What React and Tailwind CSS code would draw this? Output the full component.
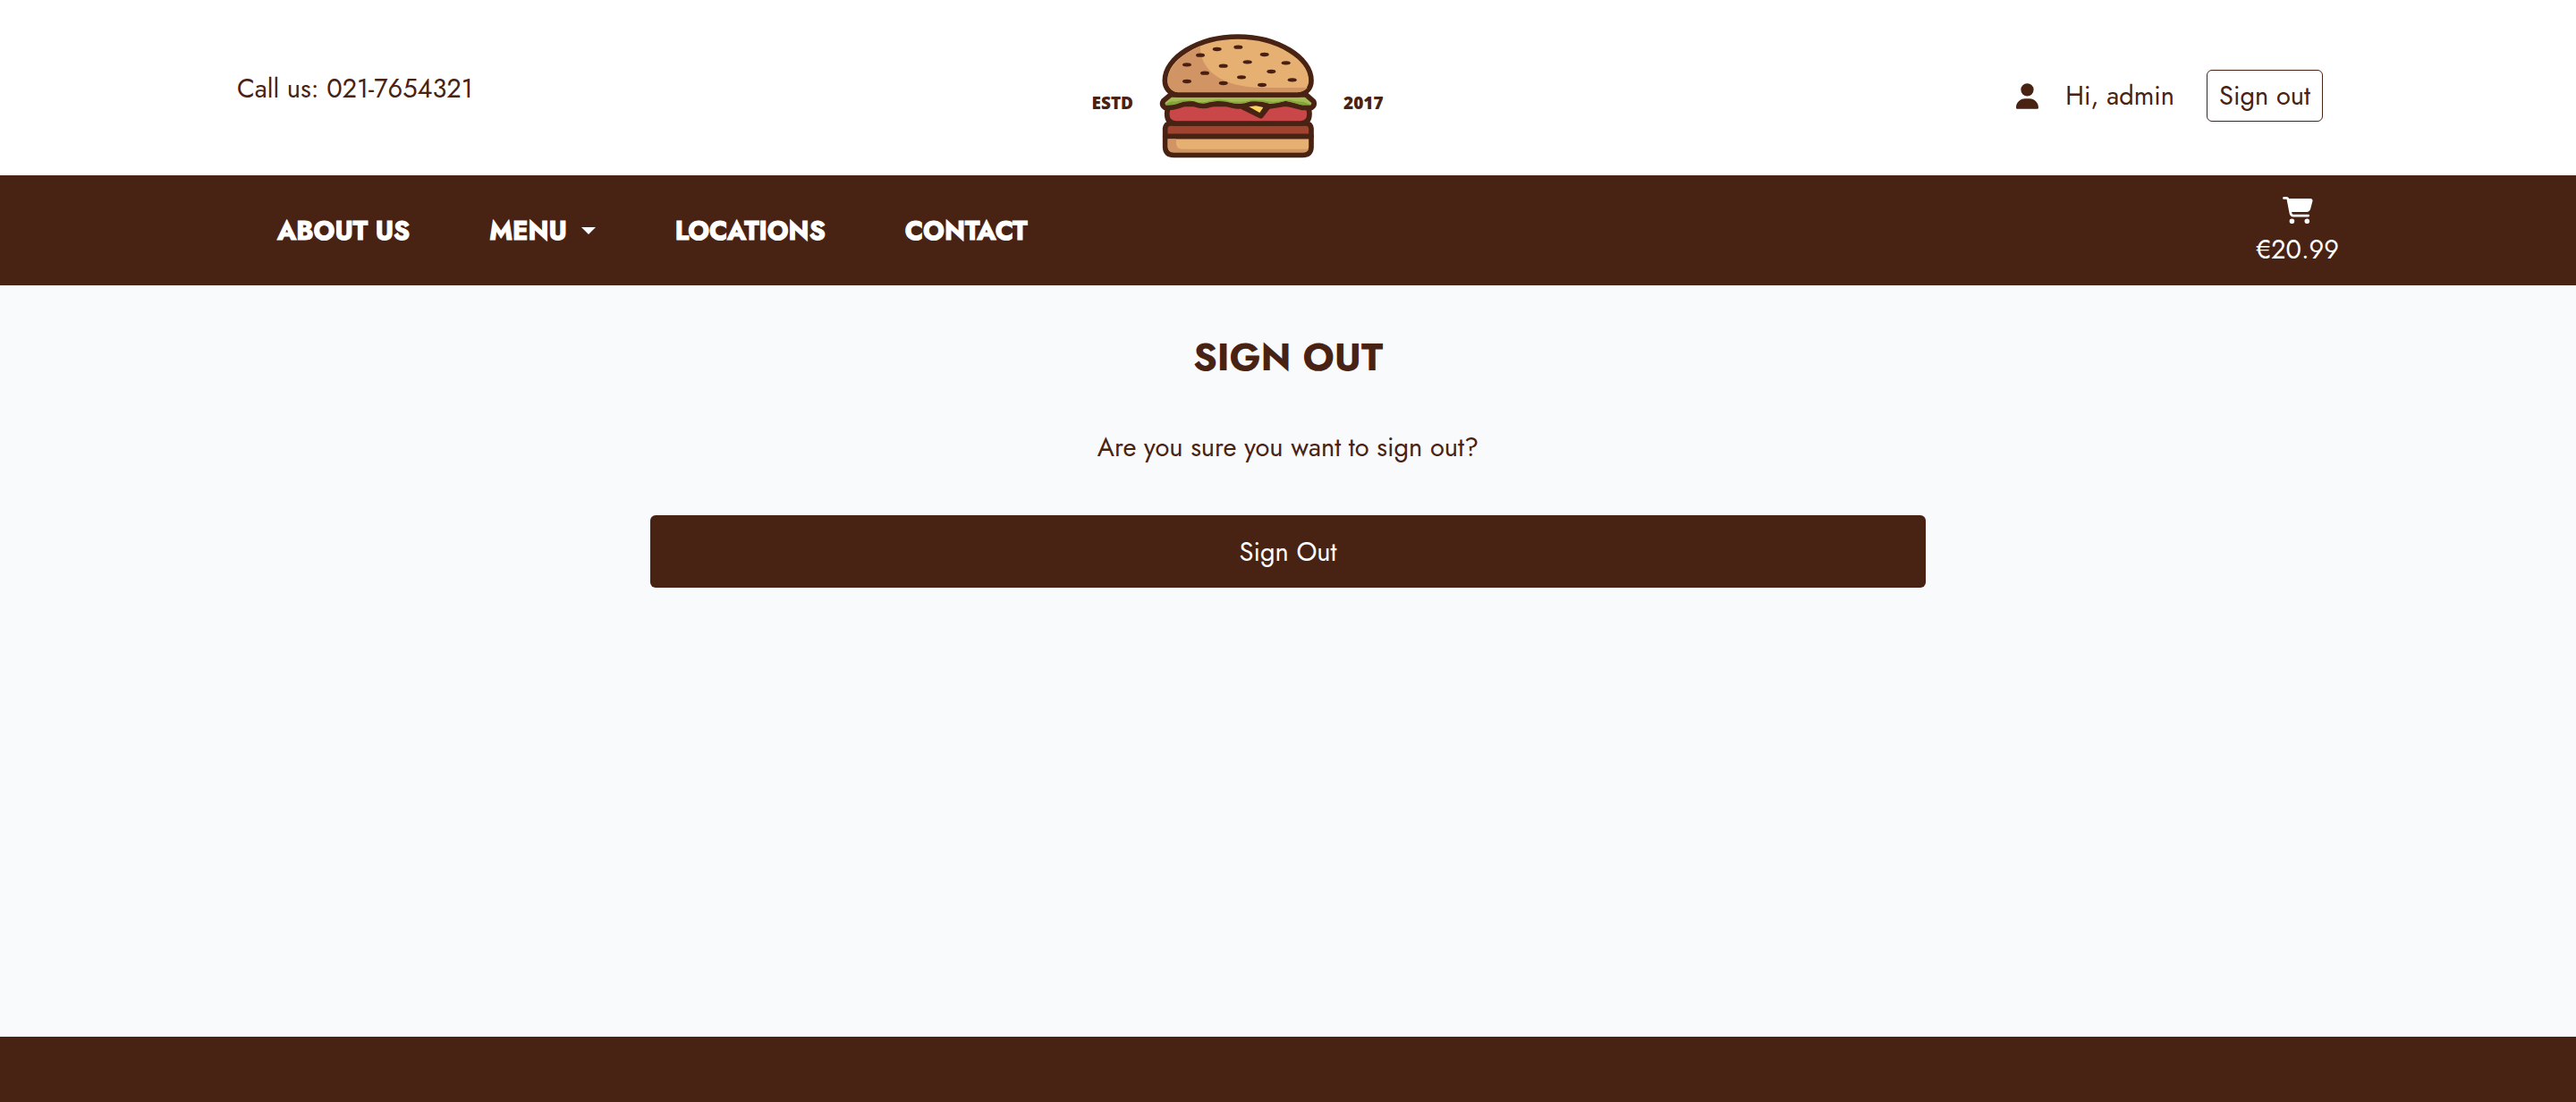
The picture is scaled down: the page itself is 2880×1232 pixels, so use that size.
import { FaCartShopping, FaUser } from "react-icons/fa6";

const seeds = [
  [236, 76], [307, 69], [395, 94], [467, 122], [180, 96], [135, 128], [257, 132], [338, 119],
  [418, 151], [195, 156], [318, 170], [488, 179], [135, 184], [257, 190], [387, 196],
];

function Burger() {
  return (
    <svg viewBox="42 22 531 420" className="w-[177px] h-[140px]" role="img" aria-label="Burger">
      <g stroke="#482212" strokeWidth="17" strokeLinejoin="round">
        {/* bottom bun and patty */}
        <path d="M62 368H552V405Q550 431 523 431H91Q64 431 62 405Z" fill="#e5b072" />
        <path d="M62 368V342Q64 325 80 325H534Q550 325 552 342V368Z" fill="#a04430" />
        {/* tomato */}
        <path d="M68 293Q68 262 98 260H516Q546 262 546 293Q546 325 516 325H98Q68 325 68 293Z" fill="#c94749" />
        {/* cheese */}
        <path d="M322 270L383 300L408 268L380 254Z" fill="#482212" />
        {/* lettuce */}
        <path
          d="M80 229L56 249Q48 262 61 272Q87 273 108 266Q135 254 160 260Q188 272 213 262Q252 252 288 265Q316 272 348 260Q386 256 412 268Q440 266 466 258Q500 266 520 272H553Q565 264 560 251L535 229Z"
          fill="#a4ba52"
        />
        {/* top bun */}
        <path d="M104 229C76 226 61 205 61 181C61 105 172 34 306 34C440 34 552 105 552 181C552 205 537 227 506 229Z" fill="#e5b072" />
      </g>
      <path d="M104 220C82 219 71 202 71 181C71 140 112 93 180 66C178 126 225 205 398 205H540C531 215 518 220 506 220Z" fill="#d19465" />
      <path d="M63 263C66 256 80 250 95 252Q124 243 145 250Q180 258 214 249Q248 241 285 252Q330 254 352 246Q390 246 424 253Q452 250 476 246Q505 254 525 252L551 263H521Q492 252 466 249Q435 258 412 258Q380 248 348 250Q310 261 287 257Q248 246 213 252Q190 260 160 252Q130 248 106 257Q90 264 63 263Z" fill="#82a43b" />
      <path d="M343 269L367 266L391 271L379 289Z" fill="#f8d35e" />
      <path d="M71 377H99V394Q101 411 119 411H543Q540 422 523 422H91Q73 420 71 405Z" fill="#d19465" />
      <g fill="#481f11">
        {seeds.map(([x, y]) => (
          <ellipse key={`${x}-${y}`} cx={x} cy={y} rx="15" ry="6.5" />
        ))}
      </g>
    </svg>
  );
}

export default function App() {
  return (
    <div className="flex min-h-screen flex-col bg-[#f8fafc] font-['Jost','Lato',sans-serif] text-[29px] leading-[42px] text-[#482212]">
      <header className="bg-white">
        <div className="mx-auto flex h-[196px] max-w-[2350px] items-start justify-between">
          <p className="pt-[78px]">Call us: 021-7654321</p>
          <a href="#home" className="flex items-center gap-[29px] pt-[37px] font-['Open_Sans',sans-serif] text-[19px] leading-6 font-extrabold">
            <span className="pt-4">ESTD</span>
            <Burger />
            <span className="pt-4">2017</span>
          </a>
          <div className="flex items-center pt-[78px] pr-[18px] pl-4">
            <FaUser className="h-[29px] w-[25px]" />
            <span className="ml-[30px]">Hi, admin</span>
            <a href="#sign-out" className="ml-9 rounded-md border border-[#482212] px-[13px] py-[7px]">
              Sign out
            </a>
          </div>
        </div>
      </header>

      <nav className="bg-[#482212] text-white">
        <div className="mx-auto flex h-[123px] max-w-[2350px] items-center justify-between">
          <div className="flex items-center gap-[89px] pl-[45px] font-bold [-webkit-text-stroke:1px_white]">
            <a href="#about">ABOUT US</a>
            <button type="button" className="flex items-center gap-4 font-bold">
              MENU
              <span className="border-x-8 border-t-8 border-x-transparent border-t-white" />
            </button>
            <a href="#locations">LOCATIONS</a>
            <a href="#contact">CONTACT</a>
          </div>
          <a href="#cart" className="flex flex-col items-center gap-2 pt-1">
            <FaCartShopping className="h-[30px] w-[34px]" />
            <span>€20.99</span>
          </a>
        </div>
      </nav>

      <main className="mx-auto flex w-full max-w-[1426px] flex-1 flex-col items-center text-center">
        <h1 className="pt-[53px] text-[43px] leading-[54px] font-bold">SIGN OUT</h1>
        <p className="pt-[53px]">Are you sure you want to sign out?</p>
        <button type="button" className="mt-[55px] h-[81px] w-full rounded-md bg-[#482212] text-white">
          Sign Out
        </button>
      </main>

      <footer className="h-[73px] bg-[#482212]" />
    </div>
  );
}
